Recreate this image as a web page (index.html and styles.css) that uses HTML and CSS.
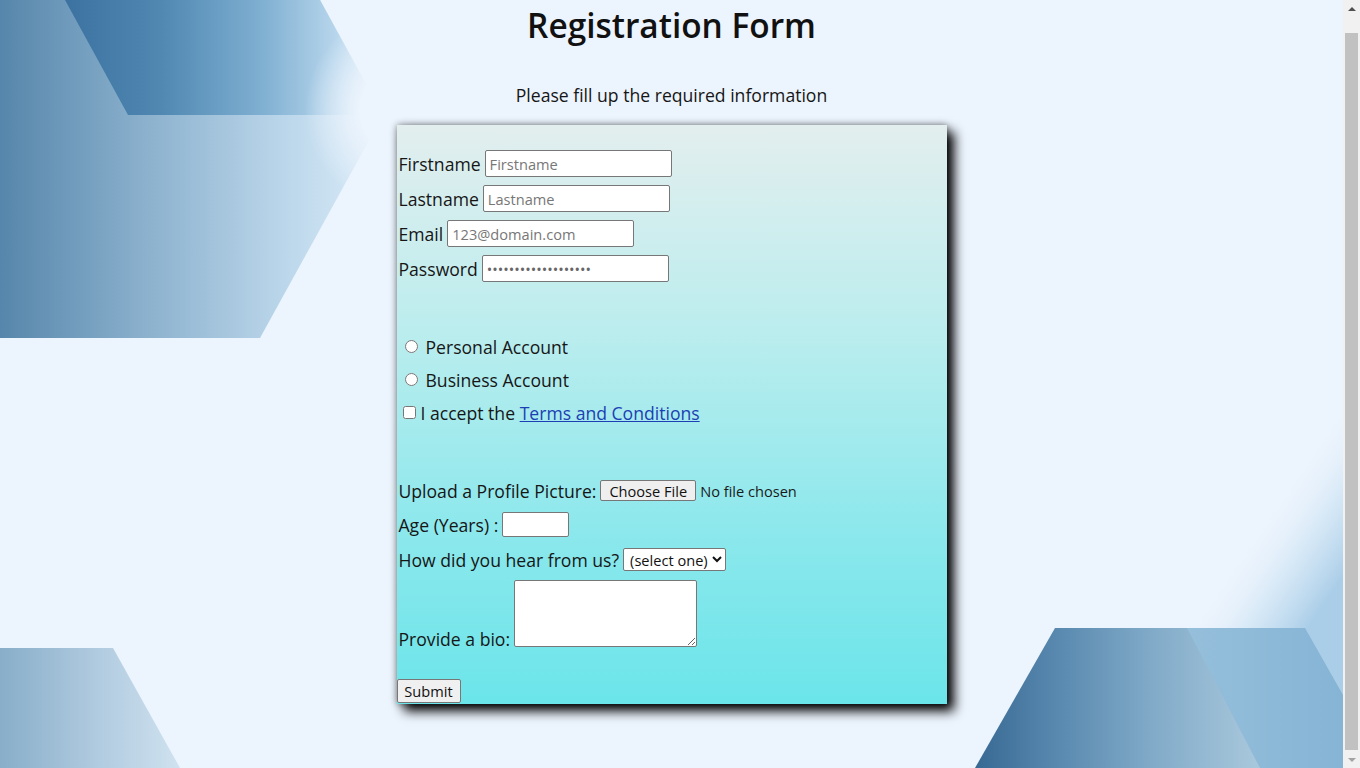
FILE: index.html
```html
<!DOCTYPE html>
<html lang="en">
<head>
<meta charset="utf-8">
<title>Registration Form</title>
<link rel="stylesheet" href="styles.css">
</head>
<body>
<div class="window">
  <div class="viewport">
    <svg class="bg" width="1343" height="768" viewBox="0 0 1343 768" aria-hidden="true">
      <defs>
        <linearGradient id="gA" gradientUnits="userSpaceOnUse" x1="0" y1="0" x2="383" y2="0">
          <stop offset="0" stop-color="#5686ab"/>
          <stop offset="0.4" stop-color="#8eb3cf"/>
          <stop offset="0.75" stop-color="#bcd7eb"/>
          <stop offset="1" stop-color="#dbecf8"/>
        </linearGradient>
        <linearGradient id="gB" gradientUnits="userSpaceOnUse" x1="65" y1="0" x2="385" y2="0">
          <stop offset="0" stop-color="#3c72a0"/>
          <stop offset="0.3" stop-color="#5088b2"/>
          <stop offset="0.62" stop-color="#80b0d2"/>
          <stop offset="0.85" stop-color="#b8d6ec"/>
          <stop offset="1" stop-color="#e4f0fa"/>
        </linearGradient>
        <radialGradient id="mfade" gradientUnits="userSpaceOnUse" cx="405" cy="110" r="100">
          <stop offset="0" stop-color="#000"/>
          <stop offset="0.45" stop-color="#000"/>
          <stop offset="1" stop-color="#fff"/>
        </radialGradient>
        <mask id="mA" maskUnits="userSpaceOnUse" x="0" y="0" width="1343" height="768">
          <rect x="0" y="0" width="1343" height="768" fill="#fff"/>
          <circle cx="405" cy="110" r="100" fill="url(#mfade)"/>
        </mask>
        <linearGradient id="gC" gradientUnits="userSpaceOnUse" x1="0" y1="0" x2="180" y2="0">
          <stop offset="0" stop-color="#88aec9"/>
          <stop offset="0.55" stop-color="#b1cbe0"/>
          <stop offset="1" stop-color="#cfe2ef"/>
        </linearGradient>
        <linearGradient id="gD" gradientUnits="userSpaceOnUse" x1="975" y1="0" x2="1260" y2="0">
          <stop offset="0" stop-color="#386993"/>
          <stop offset="0.3" stop-color="#5a8ab0"/>
          <stop offset="0.65" stop-color="#84adca"/>
          <stop offset="1" stop-color="#a9c8dc"/>
        </linearGradient>
        <linearGradient id="gE" gradientUnits="userSpaceOnUse" x1="1187" y1="0" x2="1343" y2="0">
          <stop offset="0" stop-color="#95bfdb"/>
          <stop offset="1" stop-color="#86b4d5"/>
        </linearGradient>
        <linearGradient id="glowR" gradientUnits="userSpaceOnUse" x1="1261" y1="520" x2="1343" y2="576">
          <stop offset="0" stop-color="#ecf4fd" stop-opacity="0"/>
          <stop offset="0.5" stop-color="#d2e6f5" stop-opacity="0.8"/>
          <stop offset="1" stop-color="#abcee8" stop-opacity="1"/>
        </linearGradient>
      </defs>
      <rect x="0" y="0" width="1343" height="768" fill="#ecf4fd"/>
      <g mask="url(#mA)">
        <polygon points="0,0 320,0 383,115 260,338 0,338" fill="url(#gA)"/>
        <polygon points="65,0 320,0 383,115 128,115" fill="url(#gB)"/>
      </g>
      <polygon points="0,648 113,648 180,768 0,768" fill="url(#gC)"/>
      <polygon points="1343,400 1343,768 1180,768 1180,640" fill="url(#glowR)"/>
      <polygon points="1055,628 1305,628 1343,695 1343,768 975,768" fill="url(#gD)"/>
      <polygon points="1187,628 1305,628 1343,695 1343,768 1260,768" fill="url(#gE)"/>
    </svg>

    <main class="content">
      <h1 class="title">Registration Form</h1>
      <p class="subtitle">Please fill up the required information</p>

      <form class="card">
        <div class="row">
          <label class="lbl" for="fn">Firstname</label>
          <input class="text" id="fn" type="text" placeholder="Firstname">
        </div>
        <div class="row">
          <label class="lbl" for="ln">Lastname</label>
          <input class="text" id="ln" type="text" placeholder="Lastname">
        </div>
        <div class="row">
          <label class="lbl" for="em">Email</label>
          <input class="text" id="em" type="email" placeholder="123@domain.com">
        </div>
        <div class="row">
          <label class="lbl" for="pw">Password</label>
          <input class="text pass" id="pw" type="password" value="abcdefghijklmnopqrs">
        </div>

        <div class="group">
          <div class="row row-s">
            <input class="radio" type="radio" name="acct" id="pa">
            <label class="lbl" for="pa">Personal Account</label>
          </div>
          <div class="row row-s">
            <input class="radio" type="radio" name="acct" id="ba">
            <label class="lbl" for="ba">Business Account</label>
          </div>
          <div class="row row-s">
            <input class="check" type="checkbox" id="tc">
            <label class="lbl lbl-tight" for="tc">I accept the <a class="link" href="#">Terms and Conditions</a></label>
          </div>
        </div>

        <div class="group group-2">
          <div class="row row-s">
            <label class="lbl" for="pic">Upload a Profile Picture:</label>
            <input class="file" id="pic" type="file">
          </div>
          <div class="row">
            <label class="lbl" for="age">Age (Years) :</label>
            <input class="age" id="age" type="text">
          </div>
          <div class="row">
            <label class="lbl" for="src">How did you hear from us?</label>
            <select class="select" id="src">
              <option>(select one)</option>
              <option>Friends</option>
              <option>Internet</option>
            </select>
          </div>
          <div class="row row-bio">
            <label class="lbl" for="bio">Provide a bio:</label>
            <textarea class="bio" id="bio"></textarea>
          </div>
        </div>

        <div class="actions">
          <button class="submit" type="submit">Submit</button>
        </div>
      </form>
    </main>
  </div>

  <div class="scrollbar" aria-hidden="true">
    <div class="sb-btn"><span class="arrow-up"></span></div>
    <div class="sb-track"><div class="sb-thumb"></div></div>
    <div class="sb-btn"><span class="arrow-down"></span></div>
  </div>
</div>
</body>
</html>
```

FILE: styles.css
```css
html, body {
  margin: 0;
  padding: 0;
}

body {
  width: 1360px;
  height: 768px;
  overflow: hidden;
  font-family: "Open Sans", "Liberation Sans", sans-serif;
  color: #161616;
  background: #ecf4fd;
}

.window {
  display: flex;
  width: 1360px;
  height: 768px;
}

.viewport {
  display: grid;
  width: 1343px;
  height: 768px;
  overflow: hidden;
}

.bg,
.content {
  grid-area: 1 / 1;
}

.bg {
  display: block;
}

.content {
  display: flex;
  flex-direction: column;
  align-items: center;
  z-index: 1;
}

.title {
  margin: 5px 0 0;
  font-size: 33.4px;
  line-height: 40px;
  font-weight: 600;
  color: #111;
}

.subtitle {
  margin: 38px 0 0;
  font-size: 17.6px;
  line-height: 24px;
  color: #161616;
}

.card {
  box-sizing: border-box;
  width: 550px;
  margin-top: 18px;
  padding: 21px 0 1px 0;
  background: linear-gradient(to bottom, #e3eeee 0%, #bcedee 35%, #8ce8ec 70%, #6be5ea 100%);
  box-shadow: 7px 7px 11px #000, 0 0 7px rgba(0, 0, 0, 0.45);
  display: flex;
  flex-direction: column;
}

.row {
  display: flex;
  align-items: center;
  height: 35px;
  gap: 4px;
  padding-left: 2px;
}

.row-s {
  height: 33px;
}

.group {
  margin-top: 44px;
  display: flex;
  flex-direction: column;
}

.group-2 {
  margin-top: 45px;
}

.lbl {
  font-size: 17.6px;
  line-height: 24px;
  white-space: nowrap;
}

.lbl-tight {
  margin-left: -4px;
}

.link {
  color: #1c3fb3;
  text-decoration: underline;
}

.text {
  box-sizing: border-box;
  width: 187px;
  height: 27px;
  margin: 0;
  padding: 0 4px;
  border: 1px solid #777;
  border-radius: 2px;
  background: #fff;
  font-family: "Open Sans", "Liberation Sans", sans-serif;
  font-size: 14.6px;
  color: #222;
}

.text::placeholder {
  color: #777;
}

.pass {
  color: #666;
}

.radio {
  width: 13px;
  height: 13px;
  margin: 0 4px 0 6px;
}

.check {
  width: 13px;
  height: 13px;
  margin: 0 5px 0 4px;
}

.file {
  margin: 0;
  font-family: "Open Sans", "Liberation Sans", sans-serif;
  font-size: 14.6px;
  color: #1a1a1a;
}

.file::file-selector-button {
  box-sizing: border-box;
  height: 21px;
  padding: 0 8px;
  margin-right: 4px;
  border: 1px solid #777;
  border-radius: 2px;
  background: #efefef;
  font-family: "Open Sans", "Liberation Sans", sans-serif;
  font-size: 14.6px;
  line-height: 18px;
  color: #111;
}

.age {
  box-sizing: border-box;
  width: 67px;
  height: 25px;
  margin: 0;
  border: 1px solid #777;
  border-radius: 2px;
  background: #fff;
}

.select {
  box-sizing: border-box;
  width: 103px;
  height: 23px;
  margin: 0;
  padding: 0 0 0 2px;
  border: 1px solid #777;
  border-radius: 2px;
  background: #fff;
  font-family: "Open Sans", "Liberation Sans", sans-serif;
  font-size: 14.6px;
  color: #111;
}

.row-bio {
  height: auto;
  align-items: flex-end;
  margin-top: 1px;
}

.bio {
  box-sizing: border-box;
  width: 183px;
  height: 67px;
  margin: 2px 0 4px 0;
  border: 1px solid #777;
  border-radius: 2px;
  background: #fff;
  resize: both;
}

.actions {
  margin-top: 28px;
  display: flex;
}

.submit {
  box-sizing: border-box;
  width: 64px;
  height: 24px;
  padding: 0;
  border: 1px solid #777;
  border-radius: 2px;
  background: #f0f0f0;
  font-family: "Open Sans", "Liberation Sans", sans-serif;
  font-size: 14.6px;
  line-height: 20px;
  color: #111;
}

.scrollbar {
  width: 17px;
  height: 768px;
  background: #f1f1f1;
  display: flex;
  flex-direction: column;
}

.sb-btn {
  height: 17px;
  display: flex;
  align-items: center;
  justify-content: center;
}

.arrow-up {
  width: 0;
  height: 0;
  border-left: 4px solid transparent;
  border-right: 4px solid transparent;
  border-bottom: 4px solid #505050;
}

.arrow-down {
  width: 0;
  height: 0;
  border-left: 4px solid transparent;
  border-right: 4px solid transparent;
  border-top: 4px solid #a3a3a3;
}

.sb-track {
  flex: 1;
  display: flex;
  flex-direction: column;
  padding: 16px 2px 1px;
}

.sb-thumb {
  flex: 1;
  background: #c1c1c1;
}
```
